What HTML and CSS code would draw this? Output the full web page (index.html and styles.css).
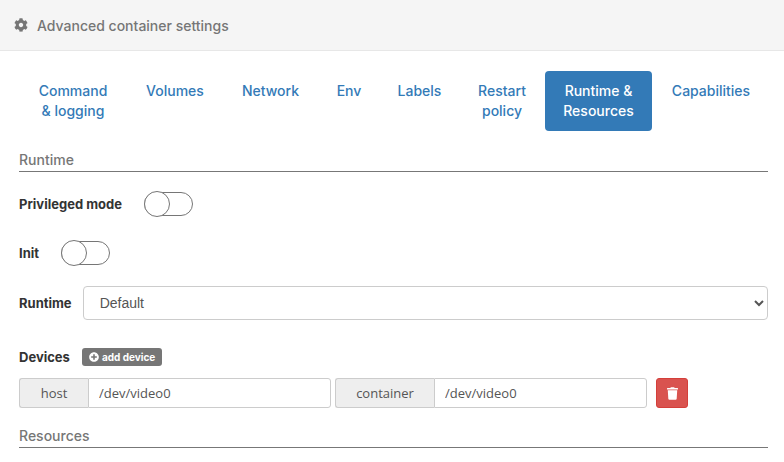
FILE: index.html
```html
<!DOCTYPE html>
<html lang="en">
<head>
<meta charset="UTF-8">
<meta name="viewport" content="width=device-width, initial-scale=1.0">
<title>Advanced container settings</title>
<link rel="stylesheet" href="styles.css">
</head>
<body>

<div class="widget-header">
    <svg class="gear" viewBox="0 0 512 512"><path d="M487.4 315.7l-42.6-24.6c4.3-23.2 4.3-47 0-70.2l42.6-24.6c4.9-2.8 7.1-8.6 5.5-14-11.1-35.6-30-67.8-54.7-94.6-3.8-4.1-10-5.1-14.8-2.3L380.8 110c-17.9-15.4-38.5-27.3-60.8-35.1V25.8c0-5.6-3.9-10.5-9.4-11.7-36.7-8.2-74.3-7.8-109.2 0-5.5 1.2-9.4 6.1-9.4 11.7V75c-22.2 7.9-42.8 19.8-60.8 35.1L88.7 85.5c-4.9-2.8-11-1.9-14.8 2.3-24.7 26.7-43.6 58.9-54.7 94.6-1.7 5.4.6 11.2 5.5 14L67.3 221c-4.3 23.2-4.3 47 0 70.2l-42.6 24.6c-4.9 2.8-7.1 8.6-5.5 14 11.1 35.6 30 67.8 54.7 94.6 3.8 4.1 10 5.1 14.8 2.3l42.6-24.6c17.9 15.4 38.5 27.3 60.8 35.1v49.2c0 5.6 3.9 10.5 9.4 11.7 36.7 8.2 74.3 7.8 109.2 0 5.5-1.2 9.4-6.1 9.4-11.7v-49.2c22.2-7.9 42.8-19.8 60.8-35.1l42.6 24.6c4.9 2.8 11 1.9 14.8-2.3 24.7-26.7 43.6-58.9 54.7-94.6 1.5-5.5-.7-11.3-5.6-14.1zM256 336c-44.1 0-80-35.9-80-80s35.9-80 80-80 80 35.9 80 80-35.9 80-80 80z"/></svg>
    <span>Advanced container settings</span>
</div>

<div class="widget-body">
    <ul class="tabs">
        <li><a href="#">Command<br>&amp; logging</a></li>
        <li><a href="#">Volumes</a></li>
        <li><a href="#">Network</a></li>
        <li><a href="#">Env</a></li>
        <li><a href="#">Labels</a></li>
        <li><a href="#">Restart<br>policy</a></li>
        <li class="active"><a href="#">Runtime &amp;<br>Resources</a></li>
        <li><a href="#">Capabilities</a></li>
    </ul>

    <div class="section-title">Runtime</div>

    <div class="row switch-row first">
        <label class="row-label">Privileged mode</label>
        <span class="switch"><i></i></span>
    </div>
    <div class="row switch-row second">
        <label class="row-label">Init</label>
        <span class="switch"><i></i></span>
    </div>

    <div class="row runtime-row">
        <label class="row-label" for="runtime">Runtime</label>
        <select id="runtime">
            <option>Default</option>
        </select>
    </div>

    <div class="row devices-row">
        <label class="row-label">Devices</label>
        <span class="add-btn">
            <svg viewBox="0 0 512 512"><path d="M256 8C119 8 8 119 8 256s111 248 248 248 248-111 248-248S393 8 256 8zm144 276c0 6.6-5.4 12-12 12h-92v92c0 6.6-5.4 12-12 12h-56c-6.6 0-12-5.4-12-12v-92h-92c-6.6 0-12-5.4-12-12v-56c0-6.6 5.4-12 12-12h92v-92c0-6.6 5.4-12 12-12h56c6.6 0 12 5.4 12 12v92h92c6.6 0 12 5.4 12 12v56z"/></svg>
            add device
        </span>
    </div>

    <div class="device-line">
        <div class="input-group host">
            <span class="addon">host</span>
            <input type="text" value="/dev/video0">
        </div>
        <div class="input-group container">
            <span class="addon">container</span>
            <input type="text" value="/dev/video0">
        </div>
        <button class="delete-btn">
            <svg viewBox="0 0 448 512"><path d="M432 32H312l-9.4-18.7A24 24 0 0 0 281.1 0H166.8a23.72 23.72 0 0 0-21.4 13.3L136 32H16A16 16 0 0 0 0 48v32a16 16 0 0 0 16 16h416a16 16 0 0 0 16-16V48a16 16 0 0 0-16-16zM53.2 467a48 48 0 0 0 47.9 45h245.8a48 48 0 0 0 47.9-45L416 128H32z"/></svg>
        </button>
    </div>

    <div class="section-title resources">Resources</div>
</div>

</body>
</html>
```

FILE: styles.css
```css
* {
    box-sizing: border-box;
}
html, body {
    height: 100%;
    overflow: hidden;
}
body {
    margin: 0;
    font-family: Inter, "Open Sans", sans-serif;
    font-size: 14px;
    color: #333;
    background: #fff;
}
.widget-header {
    display: flex;
    align-items: center;
    height: 51px;
    padding-left: 14px;
    background: #f5f5f5;
    border-bottom: 1px solid #e7e7e7;
    color: #767676;
    font-size: 14px;
    font-weight: 500;
}
.gear {
    width: 14px;
    height: 14px;
    margin-right: 9px;
    fill: #767676;
}
.widget-body {
    padding: 20px 16px 0 19px;
}
.tabs {
    display: grid;
    grid-template-columns: 108px 94px 95px 60px 79px 84px 107px 116px;
    column-gap: 1px;
    margin: 0;
    padding: 0;
    list-style: none;
    height: 60px;
    text-align: center;
    font-size: 14px;
    font-weight: 500;
    line-height: 20px;
}
.tabs a {
    display: block;
    height: 60px;
    padding: 10px 0;
    color: #337ab7;
    text-decoration: none;
    border-radius: 4px;
}
.tabs .active a {
    background: #337ab7;
    color: #fff;
}
.section-title {
    margin-top: 19px;
    padding-bottom: 2px;
    height: 22px;
    line-height: 19px;
    font-size: 14px;
    font-weight: 500;
    color: #767676;
    border-bottom: 1px solid #777;
}
.row {
    display: flex;
    align-items: center;
}
.row-label {
    font-size: 13px;
    font-weight: 700;
    color: #333;
}
.switch-row {
    gap: 22px;
    height: 26px;
}
.switch-row.first {
    margin-top: 19px;
}
.switch-row.second {
    margin-top: 23px;
}
.switch {
    position: relative;
    display: block;
    width: 49px;
    height: 24px;
    border: 1px solid #767676;
    border-radius: 12px;
    background: #fff;
}
.switch i {
    position: absolute;
    left: -1px;
    top: -2px;
    width: 26px;
    height: 26px;
    border: 1px solid #767676;
    border-radius: 50%;
    background: #fff;
}
.runtime-row {
    margin-top: 20px;
    gap: 11px;
}
select {
    flex: 1;
    height: 34px;
    padding: 6px 12px;
    font-family: "Liberation Sans", Arial, sans-serif;
    font-size: 14px;
    color: #555;
    background: #fff;
    border: 1px solid #ccc;
    border-radius: 4px;
}
.devices-row {
    margin-top: 28px;
    gap: 12px;
}
.add-btn {
    display: inline-flex;
    align-items: center;
    gap: 3px;
    height: 18px;
    padding: 0 7px;
    background: #767676;
    color: #fff;
    font-size: 10px;
    font-weight: 700;
    border-radius: 3px;
}
.add-btn svg {
    width: 10px;
    height: 10px;
    fill: #fff;
}
.device-line {
    display: flex;
    margin-top: 12px;
}
.input-group {
    display: flex;
    height: 30px;
    font-family: "Open Sans", sans-serif;
    font-size: 13px;
}
.input-group.host {
    width: 312px;
    margin-right: 4px;
}
.input-group.container {
    width: 312px;
    margin-right: 9px;
}
.addon {
    display: flex;
    align-items: center;
    justify-content: center;
    color: #555;
    background: #eee;
    border: 1px solid #ccc;
    border-right: 0;
    border-radius: 3px 0 0 3px;
}
.host .addon {
    width: 69px;
}
.container .addon {
    width: 99px;
}
.input-group input {
    flex: 1;
    min-width: 0;
    height: 30px;
    padding: 5px 10px;
    font: inherit;
    color: #555;
    border: 1px solid #ccc;
    border-radius: 0 3px 3px 0;
    outline: none;
}
.delete-btn {
    display: flex;
    align-items: center;
    justify-content: center;
    width: 32px;
    height: 30px;
    padding: 0;
    background: #d9534f;
    border: 1px solid #d43f3a;
    border-radius: 3px;
}
.delete-btn svg {
    width: 11px;
    height: 13px;
    fill: #fff;
}
.section-title.resources {
    margin-top: 18px;
}
```
